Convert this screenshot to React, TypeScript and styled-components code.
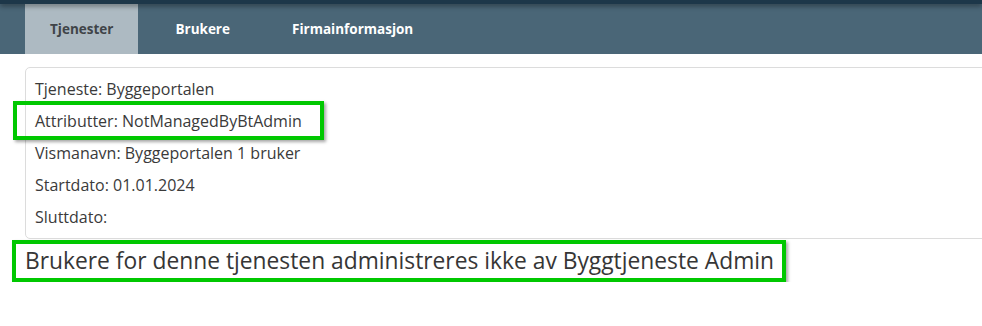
import styled, { createGlobalStyle } from "styled-components";

const GlobalStyle = createGlobalStyle`
    body {
        margin: 0;
        background: #fff;
        font-family: "Open Sans", "Noto Sans", sans-serif;
        color: #333;
        overflow: hidden;
    }
`;

const TopStrip = styled.div`
    height: 4px;
    background: #1d3749;
    box-shadow: 0 2px 5px rgba(0, 0, 0, 0.45);
    position: relative;
    z-index: 1;
`;

const NavBar = styled.nav`
    display: flex;
    gap: 12px;
    height: 50px;
    padding-left: 25px;
    background: #4a6677;
`;

const Tab = styled.div<{ $active?: boolean }>`
    display: flex;
    align-items: center;
    padding: 0 25px;
    font-size: 13.5px;
    font-weight: 700;
    color: ${(p) => (p.$active ? "#3f4448" : "#fff")};
    background: ${(p) => (p.$active ? "#adbac2" : "transparent")};
`;

const Content = styled.main`
    padding: 13px 0 0 25px;
`;

const Card = styled.section`
    width: 980px;
    padding: 5px 9px;
    border: 1px solid #dcdcdc;
    border-radius: 5px;
`;

const Row = styled.div`
    position: relative;
    height: 32px;
    line-height: 32px;
    font-size: 16px;
    color: #3a3a3a;
`;

const RowMark = styled.span`
    position: absolute;
    left: -22px;
    top: -4px;
    width: 311px;
    height: 39px;
    box-sizing: border-box;
    border: 4px solid #00c800;
    box-shadow: 2px 2px 3px rgba(0, 0, 0, 0.35);
    pointer-events: none;
`;

const Notice = styled.h2`
    display: inline-block;
    margin: 1px 0 0 -13px;
    padding: 0 8px 0 9px;
    height: 42px;
    box-sizing: border-box;
    border: 4px solid #00c800;
    box-shadow: 2px 2px 3px rgba(0, 0, 0, 0.35);
    font-size: 22.8px;
    font-weight: 400;
    line-height: 34px;
    color: #363636;
    white-space: nowrap;
`;

const fields = [
    { label: "Tjeneste", value: "Byggeportalen" },
    { label: "Attributter", value: "NotManagedByBtAdmin", marked: true },
    { label: "Vismanavn", value: "Byggeportalen 1 bruker" },
    { label: "Startdato", value: "01.01.2024" },
    { label: "Sluttdato", value: "" },
];

export default function App() {
    return (
        <>
            <GlobalStyle />
            <TopStrip />
            <NavBar>
                <Tab $active>Tjenester</Tab>
                <Tab>Brukere</Tab>
                <Tab>Firmainformasjon</Tab>
            </NavBar>
            <Content>
                <Card>
                    {fields.map((f) => (
                        <Row key={f.label}>
                            {f.marked && <RowMark />}
                            {f.label}: {f.value}
                        </Row>
                    ))}
                </Card>
                <Notice>Brukere for denne tjenesten administreres ikke av Byggtjeneste Admin</Notice>
            </Content>
        </>
    );
}
